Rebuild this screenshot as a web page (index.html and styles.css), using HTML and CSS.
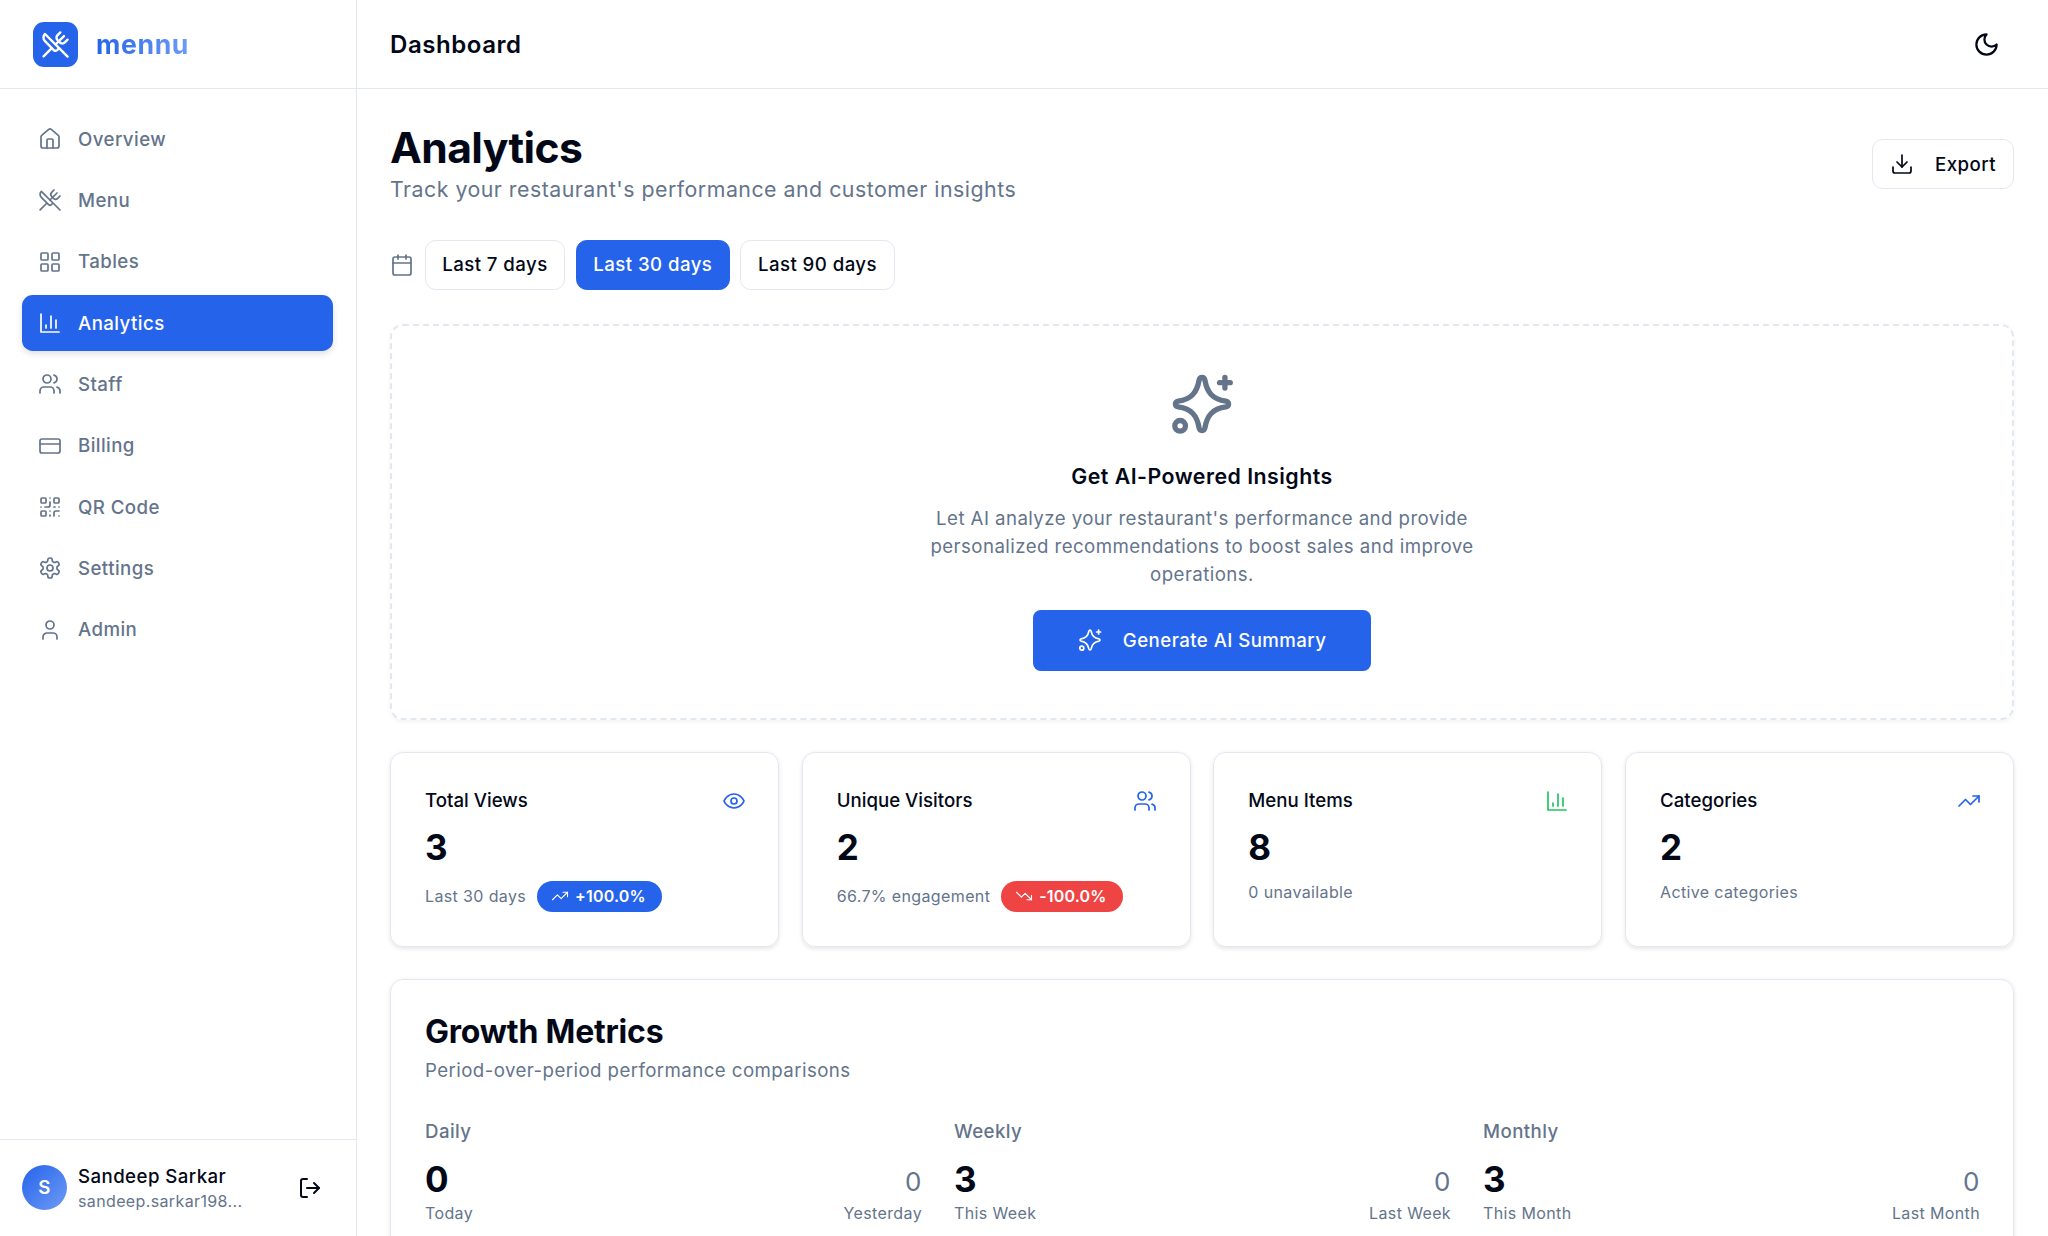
FILE: index.html
```html
<!DOCTYPE html>
<html lang="en">
<head>
    <meta charset="UTF-8">
    <meta name="viewport" content="width=device-width, initial-scale=1.0">
    <title>Analytics - mennu</title>
    <link rel="stylesheet" href="styles.css">
</head>
<body>
    <!-- icon sprite -->
    <svg class="sprite" aria-hidden="true">
        <symbol id="i-home" viewBox="0 0 24 24"><path d="M15 21v-8a1 1 0 0 0-1-1h-4a1 1 0 0 0-1 1v8"/><path d="M3 10a2 2 0 0 1 .709-1.528l7-5.999a2 2 0 0 1 2.582 0l7 5.999A2 2 0 0 1 21 10v9a2 2 0 0 1-2 2H5a2 2 0 0 1-2-2z"/></symbol>
        <symbol id="i-utensils" viewBox="0 0 24 24"><path d="m16 2-2.3 2.3a3 3 0 0 0 0 4.2l1.8 1.8a3 3 0 0 0 4.2 0L22 8"/><path d="M15 15 3.3 3.3a4.2 4.2 0 0 0 0 6l7.3 7.3c.7.7 2 .7 2.8 0L15 15Zm0 0 7 7"/><path d="m2.1 21.8 6.4-6.3"/><path d="m19 5-7 7"/></symbol>
        <symbol id="i-grid" viewBox="0 0 24 24"><rect x="3" y="3" width="7" height="7" rx="1"/><rect x="14" y="3" width="7" height="7" rx="1"/><rect x="14" y="14" width="7" height="7" rx="1"/><rect x="3" y="14" width="7" height="7" rx="1"/></symbol>
        <symbol id="i-chart" viewBox="0 0 24 24"><path d="M3 3v18h18"/><path d="M18 17V9"/><path d="M13 17V5"/><path d="M8 17v-3"/></symbol>
        <symbol id="i-users" viewBox="0 0 24 24"><path d="M16 21v-2a4 4 0 0 0-4-4H6a4 4 0 0 0-4 4v2"/><circle cx="9" cy="7" r="4"/><path d="M22 21v-2a4 4 0 0 0-3-3.87"/><path d="M16 3.13a4 4 0 0 1 0 7.75"/></symbol>
        <symbol id="i-card" viewBox="0 0 24 24"><rect x="2" y="5" width="20" height="14" rx="2"/><path d="M2 10h20"/></symbol>
        <symbol id="i-qr" viewBox="0 0 24 24"><rect x="3" y="3" width="5" height="5" rx="1"/><rect x="16" y="3" width="5" height="5" rx="1"/><rect x="3" y="16" width="5" height="5" rx="1"/><path d="M21 16h-3a2 2 0 0 0-2 2v3"/><path d="M21 21v.01"/><path d="M12 7v3a2 2 0 0 1-2 2H7"/><path d="M3 12h.01"/><path d="M12 3h.01"/><path d="M12 16v.01"/><path d="M16 12h1"/><path d="M21 12v.01"/><path d="M12 21v-1"/></symbol>
        <symbol id="i-settings" viewBox="0 0 24 24"><path d="M12.22 2h-.44a2 2 0 0 0-2 2v.18a2 2 0 0 1-1 1.73l-.43.25a2 2 0 0 1-2 0l-.15-.08a2 2 0 0 0-2.73.73l-.22.38a2 2 0 0 0 .73 2.73l.15.1a2 2 0 0 1 1 1.72v.51a2 2 0 0 1-1 1.74l-.15.09a2 2 0 0 0-.73 2.73l.22.38a2 2 0 0 0 2.73.73l.15-.08a2 2 0 0 1 2 0l.43.25a2 2 0 0 1 1 1.73V20a2 2 0 0 0 2 2h.44a2 2 0 0 0 2-2v-.18a2 2 0 0 1 1-1.73l.43-.25a2 2 0 0 1 2 0l.15.08a2 2 0 0 0 2.73-.73l.22-.39a2 2 0 0 0-.73-2.73l-.15-.08a2 2 0 0 1-1-1.74v-.5a2 2 0 0 1 1-1.74l.15-.09a2 2 0 0 0 .73-2.73l-.22-.38a2 2 0 0 0-2.73-.73l-.15.08a2 2 0 0 1-2 0l-.43-.25a2 2 0 0 1-1-1.73V4a2 2 0 0 0-2-2z"/><circle cx="12" cy="12" r="3"/></symbol>
        <symbol id="i-user" viewBox="0 0 24 24"><path d="M19 21v-2a4 4 0 0 0-4-4H9a4 4 0 0 0-4 4v2"/><circle cx="12" cy="7" r="4"/></symbol>
        <symbol id="i-logout" viewBox="0 0 24 24"><path d="M9 21H5a2 2 0 0 1-2-2V5a2 2 0 0 1 2-2h4"/><path d="m16 17 5-5-5-5"/><path d="M21 12H9"/></symbol>
        <symbol id="i-moon" viewBox="0 0 24 24"><path d="M12 3a6 6 0 0 0 9 9 9 9 0 1 1-9-9Z"/></symbol>
        <symbol id="i-download" viewBox="0 0 24 24"><path d="M21 15v4a2 2 0 0 1-2 2H5a2 2 0 0 1-2-2v-4"/><path d="m7 10 5 5 5-5"/><path d="M12 15V3"/></symbol>
        <symbol id="i-calendar" viewBox="0 0 24 24"><path d="M8 2v4"/><path d="M16 2v4"/><rect x="3" y="4" width="18" height="18" rx="2"/><path d="M3 10h18"/></symbol>
        <symbol id="i-eye" viewBox="0 0 24 24"><path d="M2 12s3-7 10-7 10 7 10 7-3 7-10 7-10-7-10-7Z"/><circle cx="12" cy="12" r="3"/></symbol>
        <symbol id="i-up" viewBox="0 0 24 24"><path d="m22 7-8.5 8.5-5-5L2 17"/><path d="M16 7h6v6"/></symbol>
        <symbol id="i-down" viewBox="0 0 24 24"><path d="m22 17-8.5-8.5-5 5L2 7"/><path d="M16 17h6v-6"/></symbol>
        <symbol id="i-sparkles" viewBox="0 0 24 24"><path d="M10.9 3.1c.3-1.4 1.9-1.4 2.2 0 .8 4.5 2.8 7.1 7.8 7.8 1.4.3 1.4 1.9 0 2.2-5 .7-7 3.3-7.8 7.8-.3 1.4-1.9 1.4-2.2 0-.8-4.5-2.8-7.1-7.8-7.8-1.4-.3-1.4-1.9 0-2.2 5-.7 7-3.3 7.8-7.8Z"/><path d="M20.6 2v4"/><path d="M22.6 4h-4"/><circle cx="3.8" cy="20.2" r="2"/></symbol>
    </svg>

    <div class="app">
        <aside class="sidebar">
            <div class="brand">
                <span class="brand-mark"><svg class="icon-brand"><use href="#i-utensils"/></svg></span>
                <span class="brand-name">mennu</span>
            </div>

            <nav class="nav">
                <a class="nav-item"><svg class="icon"><use href="#i-home"/></svg>Overview</a>
                <a class="nav-item"><svg class="icon"><use href="#i-utensils"/></svg>Menu</a>
                <a class="nav-item"><svg class="icon"><use href="#i-grid"/></svg>Tables</a>
                <a class="nav-item active"><svg class="icon"><use href="#i-chart"/></svg>Analytics</a>
                <a class="nav-item"><svg class="icon"><use href="#i-users"/></svg>Staff</a>
                <a class="nav-item"><svg class="icon"><use href="#i-card"/></svg>Billing</a>
                <a class="nav-item"><svg class="icon"><use href="#i-qr"/></svg>QR Code</a>
                <a class="nav-item"><svg class="icon"><use href="#i-settings"/></svg>Settings</a>
                <a class="nav-item"><svg class="icon"><use href="#i-user"/></svg>Admin</a>
            </nav>

            <div class="account">
                <span class="avatar">S</span>
                <div class="account-text">
                    <div class="account-name">Sandeep Sarkar</div>
                    <div class="account-email">sandeep.sarkar198...</div>
                </div>
                <svg class="icon logout"><use href="#i-logout"/></svg>
            </div>
        </aside>

        <div class="main">
            <header class="topbar">
                <div class="topbar-title">Dashboard</div>
                <svg class="icon-moon"><use href="#i-moon"/></svg>
            </header>

            <main class="content">
                <div class="page-head">
                    <div>
                        <h1>Analytics</h1>
                        <p class="page-sub">Track your restaurant's performance and customer insights</p>
                    </div>
                    <button class="btn-outline export"><svg class="icon"><use href="#i-download"/></svg>Export</button>
                </div>

                <div class="ranges">
                    <svg class="icon range-icon"><use href="#i-calendar"/></svg>
                    <button class="btn-outline">Last 7 days</button>
                    <button class="btn-outline selected">Last 30 days</button>
                    <button class="btn-outline">Last 90 days</button>
                </div>

                <section class="ai-card">
                    <svg class="ai-icon"><use href="#i-sparkles"/></svg>
                    <h3>Get AI-Powered Insights</h3>
                    <p>Let AI analyze your restaurant's performance and provide personalized recommendations to boost sales and improve operations.</p>
                    <button class="btn-primary"><svg class="icon"><use href="#i-sparkles"/></svg>Generate AI Summary</button>
                </section>

                <section class="stats">
                    <div class="card stat">
                        <div class="stat-head">Total Views<svg class="icon blue"><use href="#i-eye"/></svg></div>
                        <div class="stat-value">3</div>
                        <div class="stat-foot">Last 30 days <span class="badge"><svg class="icon-badge"><use href="#i-up"/></svg>+100.0%</span></div>
                    </div>
                    <div class="card stat">
                        <div class="stat-head">Unique Visitors<svg class="icon blue"><use href="#i-users"/></svg></div>
                        <div class="stat-value">2</div>
                        <div class="stat-foot">66.7% engagement <span class="badge red"><svg class="icon-badge"><use href="#i-down"/></svg>-100.0%</span></div>
                    </div>
                    <div class="card stat">
                        <div class="stat-head">Menu Items<svg class="icon green"><use href="#i-chart"/></svg></div>
                        <div class="stat-value">8</div>
                        <div class="stat-foot">0 unavailable</div>
                    </div>
                    <div class="card stat">
                        <div class="stat-head">Categories<svg class="icon blue"><use href="#i-up"/></svg></div>
                        <div class="stat-value">2</div>
                        <div class="stat-foot">Active categories</div>
                    </div>
                </section>

                <section class="card growth">
                    <h2>Growth Metrics</h2>
                    <p class="growth-sub">Period-over-period performance comparisons</p>
                    <div class="growth-grid">
                        <div>
                            <div class="growth-label">Daily</div>
                            <div class="growth-row">
                                <div><div class="growth-now">0</div><div class="growth-cap">Today</div></div>
                                <div class="growth-prev"><div class="growth-old">0</div><div class="growth-cap">Yesterday</div></div>
                            </div>
                        </div>
                        <div>
                            <div class="growth-label">Weekly</div>
                            <div class="growth-row">
                                <div><div class="growth-now">3</div><div class="growth-cap">This Week</div></div>
                                <div class="growth-prev"><div class="growth-old">0</div><div class="growth-cap">Last Week</div></div>
                            </div>
                        </div>
                        <div>
                            <div class="growth-label">Monthly</div>
                            <div class="growth-row">
                                <div><div class="growth-now">3</div><div class="growth-cap">This Month</div></div>
                                <div class="growth-prev"><div class="growth-old">0</div><div class="growth-cap">Last Month</div></div>
                            </div>
                        </div>
                    </div>
                </section>
            </main>
        </div>
    </div>
</body>
</html>
```

FILE: styles.css
```css
* {
    box-sizing: border-box;
    margin: 0;
    padding: 0;
    letter-spacing: 0.023em;
}

html, body {
    height: 100%;
    overflow: hidden;
}

body {
    font-family: Inter, "Liberation Sans", sans-serif;
    color: #020817;
    background-color: white;
}

.sprite {
    display: none;
}

svg {
    fill: none;
    stroke: currentColor;
    stroke-width: 2;
    stroke-linecap: round;
    stroke-linejoin: round;
    flex-shrink: 0;
}

.icon {
    width: 24px;
    height: 24px;
    stroke-width: 1.7;
}

.app {
    display: flex;
    height: 1236px;
    overflow: hidden;
}

/* sidebar */
.sidebar {
    width: 357px;
    flex-shrink: 0;
    display: flex;
    flex-direction: column;
    border-right: 1.33px solid #e2e8f0;
}

.brand {
    height: 89.33px;
    display: flex;
    align-items: center;
    gap: 18px;
    padding-left: 33px;
    border-bottom: 1.33px solid #e2e8f0;
}

.brand-mark {
    width: 45px;
    height: 45px;
    display: flex;
    align-items: center;
    justify-content: center;
    background-color: #2563eb;
    border-radius: 11px;
    color: white;
}

.icon-brand {
    width: 29px;
    height: 29px;
}

.brand-name {
    font-size: 26.67px;
    font-weight: 700;
    background: linear-gradient(90deg, #2563eb, #6e9bf5);
    -webkit-background-clip: text;
    background-clip: text;
    color: transparent;
}

.nav {
    flex: 1;
    display: flex;
    flex-direction: column;
    gap: 5.33px;
    padding: 21.33px 23px 21.33px 22px;
}

.nav-item {
    height: 56px;
    display: flex;
    align-items: center;
    gap: 16px;
    padding: 1px 0 0 16px;
    border-radius: 10.67px;
    font-size: 18.67px;
    font-weight: 500;
    color: #64748b;
}

.nav-item.active {
    background-color: #2563eb;
    color: white;
    box-shadow: 0 3px 6px rgba(0, 0, 0, 0.12);
}

.account {
    height: 97.5px;
    display: flex;
    align-items: center;
    gap: 11px;
    padding: 0 22px;
    border-top: 1.33px solid #e2e8f0;
}

.avatar {
    width: 45px;
    height: 45px;
    display: flex;
    align-items: center;
    justify-content: center;
    border-radius: 50%;
    background: linear-gradient(135deg, #2563eb, #6e9bf5);
    color: white;
    font-size: 18.67px;
    font-weight: 600;
}

.account-text {
    flex: 1;
}

.account-name {
    font-size: 18.67px;
    font-weight: 500;
    line-height: 26px;
}

.account-email {
    font-size: 16px;
    line-height: 22px;
    color: #64748b;
}

.logout {
    margin-right: 12px;
    stroke-width: 2;
}

/* main column */
.main {
    flex: 1;
    min-width: 0;
    overflow: hidden;
}

.topbar {
    height: 89.33px;
    display: flex;
    align-items: center;
    justify-content: space-between;
    padding: 0 48px 0 33px;
    border-bottom: 1.33px solid #e2e8f0;
}

.topbar-title {
    font-size: 24px;
    font-weight: 600;
}

.icon-moon {
    width: 27px;
    height: 27px;
}

.content {
    padding: 32px 34px 32px 33px;
}

.page-head {
    display: flex;
    align-items: center;
    justify-content: space-between;
}

h1 {
    font-size: 42.67px;
    font-weight: 700;
    line-height: 53px;
    letter-spacing: -0.6px;
}

.page-sub {
    font-size: 21.33px;
    line-height: 30px;
    color: #64748b;
}

.btn-outline {
    height: 50px;
    display: flex;
    align-items: center;
    padding: 0 16.5px;
    background-color: white;
    border: 1.33px solid #e2e8f0;
    border-radius: 10.67px;
    font-family: inherit;
    font-size: 18.67px;
    font-weight: 500;
    color: #020817;
}

.btn-outline.selected {
    background-color: #2563eb;
    border-color: #2563eb;
    color: white;
}

.export {
    gap: 21.33px;
    margin-top: 3px;
    padding: 0 17px;
    stroke-width: 2;
}

.ranges {
    display: flex;
    align-items: center;
    gap: 10.67px;
    margin-top: 35.5px;
}

.range-icon {
    color: #64748b;
}

/* ai panel */
.ai-card {
    margin-top: 34px;
    height: 396px;
    display: flex;
    flex-direction: column;
    align-items: center;
    padding-top: 46px;
    border: 2.67px dashed #e2e8f0;
    border-radius: 13px;
    box-shadow: 0 1.33px 4px rgba(0, 0, 0, 0.05);
    text-align: center;
}

.ai-icon {
    width: 64px;
    height: 64px;
    color: #64748b;
}

.ai-card h3 {
    margin-top: 24px;
    font-size: 21.33px;
    font-weight: 600;
    line-height: 32px;
}

.ai-card p {
    width: 597px;
    margin-top: 13px;
    font-size: 18.67px;
    line-height: 28px;
    color: #64748b;
}

.btn-primary {
    height: 61px;
    display: flex;
    align-items: center;
    gap: 21.33px;
    margin-top: 21px;
    padding: 0 45px;
    background-color: #2563eb;
    border: none;
    border-radius: 8px;
    font-family: inherit;
    font-size: 18.67px;
    font-weight: 500;
    color: white;
}

/* stat cards */
.card {
    border: 1.33px solid #e2e8f0;
    border-radius: 13px;
    box-shadow: 0 1.33px 4px rgba(0, 0, 0, 0.1);
}

.stats {
    display: grid;
    grid-template-columns: repeat(4, 1fr);
    gap: 22.67px;
    margin-top: 32px;
}

.stat {
    height: 195px;
    padding: 34px 32.5px 0 34px;
}

.stat-head {
    height: 28px;
    display: flex;
    align-items: center;
    justify-content: space-between;
    font-size: 18.67px;
    font-weight: 500;
    letter-spacing: 0;
}

.stat-value {
    margin-top: 11px;
    font-size: 35px;
    font-weight: 700;
    line-height: 42px;
}

.stat-foot {
    min-height: 22px;
    display: flex;
    align-items: center;
    gap: 11px;
    margin-top: 13px;
    font-size: 16px;
    color: #64748b;
}

.blue {
    color: #2563eb;
}

.green {
    color: #22c55e;
}

.badge {
    height: 31px;
    display: flex;
    align-items: center;
    gap: 6px;
    padding: 0 16px 0 14px;
    border-radius: 16px;
    background-color: #2563eb;
    font-size: 16px;
    font-weight: 600;
    letter-spacing: 0.01em;
    color: white;
}

.badge.red {
    background-color: #ef4444;
}

.icon-badge {
    width: 18px;
    height: 18px;
    stroke-width: 1.5;
}

/* growth */
.growth {
    margin-top: 32.5px;
    padding: 32px 33px 60px 34px;
}

.growth h2 {
    font-size: 32px;
    font-weight: 700;
    line-height: 40px;
    letter-spacing: -0.2px;
}

.growth-sub {
    margin-top: 5px;
    font-size: 18.67px;
    line-height: 28px;
    color: #64748b;
}

.growth-grid {
    display: grid;
    grid-template-columns: repeat(3, 1fr);
    gap: 32px;
    margin-top: 33px;
}

.growth-label {
    font-size: 18.67px;
    line-height: 28px;
    font-weight: 500;
    color: #64748b;
}

.growth-row {
    display: flex;
    justify-content: space-between;
    margin-top: 11.6px;
}

.growth-prev {
    text-align: right;
}

.growth-now {
    font-size: 35px;
    font-weight: 700;
    line-height: 42px;
}

.growth-old {
    font-size: 26px;
    line-height: 42px;
    padding-top: 3px;
    margin-bottom: -3px;
    color: #64748b;
}

.growth-cap {
    margin-top: 1px;
    font-size: 16px;
    line-height: 24px;
    color: #64748b;
}
```
